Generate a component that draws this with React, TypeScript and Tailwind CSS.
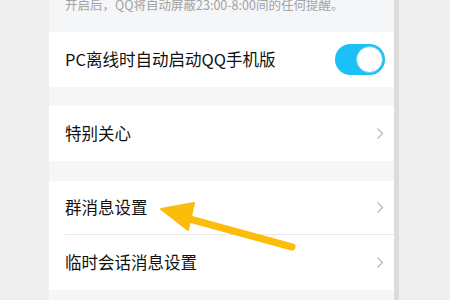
import React from "react";

const Chevron = () => (
  <svg width="8" height="13" viewBox="0 0 8 13" className="shrink-0">
    <path d="M1.5 1.5 L6.5 6.5 L1.5 11.5" fill="none" stroke="#b8b8b8" strokeWidth="1.3" />
  </svg>
);

export default function App() {
  return (
    <div
      className="relative flex w-[450px] h-[300px] overflow-hidden bg-[#efefef]"
      style={{ fontFamily: '"Noto Sans CJK SC", "Noto Sans", sans-serif' }}
    >
      <div className="w-[49px] shrink-0" />
      <div className="w-[345px] shrink-0 flex flex-col bg-[#f5f6f8]">
        <div className="h-[32px] pl-[16px] -mt-[4px] flex items-start">
          <span className="text-[12.5px] leading-[18px] text-[#a3a3a3] whitespace-nowrap">
            开启后，QQ将自动屏蔽23:00-8:00间的任何提醒。
          </span>
        </div>
        <div className="h-[55px] mt-[4px] bg-white flex items-center pl-[16px] pr-[9px] justify-between">
          <span className="text-[16.5px] text-[#111]">PC离线时自动启动QQ手机版</span>
          <div className="w-[50px] h-[31px] rounded-full bg-[#1cbff6] flex items-center justify-end pr-[2px]">
            <div className="w-[27px] h-[27px] rounded-full bg-white border border-[#5fd0f7]" />
          </div>
        </div>
        <div className="h-[19px]" />
        <div className="h-[55px] bg-white flex items-center pl-[16px] pr-[10px] justify-between">
          <span className="text-[16.5px] text-[#111]">特别关心</span>
          <Chevron />
        </div>
        <div className="h-[20px]" />
        <div className="bg-white pl-[16px]">
          <div className="h-[54px] flex items-center pr-[10px] justify-between border-b border-[#e8e8e8]">
            <span className="text-[16.5px] text-[#111]">群消息设置</span>
            <Chevron />
          </div>
          <div className="h-[55px] flex items-center pr-[10px] justify-between">
            <span className="text-[16.5px] text-[#111]">临时会话消息设置</span>
            <Chevron />
          </div>
        </div>
      </div>
      <div className="w-[5px] shrink-0 bg-[#dcdcdc]" />
      <div className="flex-1" />
      <svg className="absolute left-0 top-0" width="450" height="300" viewBox="0 0 450 300">
        <line x1="186" y1="218" x2="292" y2="247" stroke="#fbbd0a" strokeWidth="7" strokeLinecap="round" />
        <polygon points="161,209 194,203 188,230" fill="#fbbd0a" stroke="#fbbd0a" strokeWidth="2" strokeLinejoin="round" />
      </svg>
    </div>
  );
}
